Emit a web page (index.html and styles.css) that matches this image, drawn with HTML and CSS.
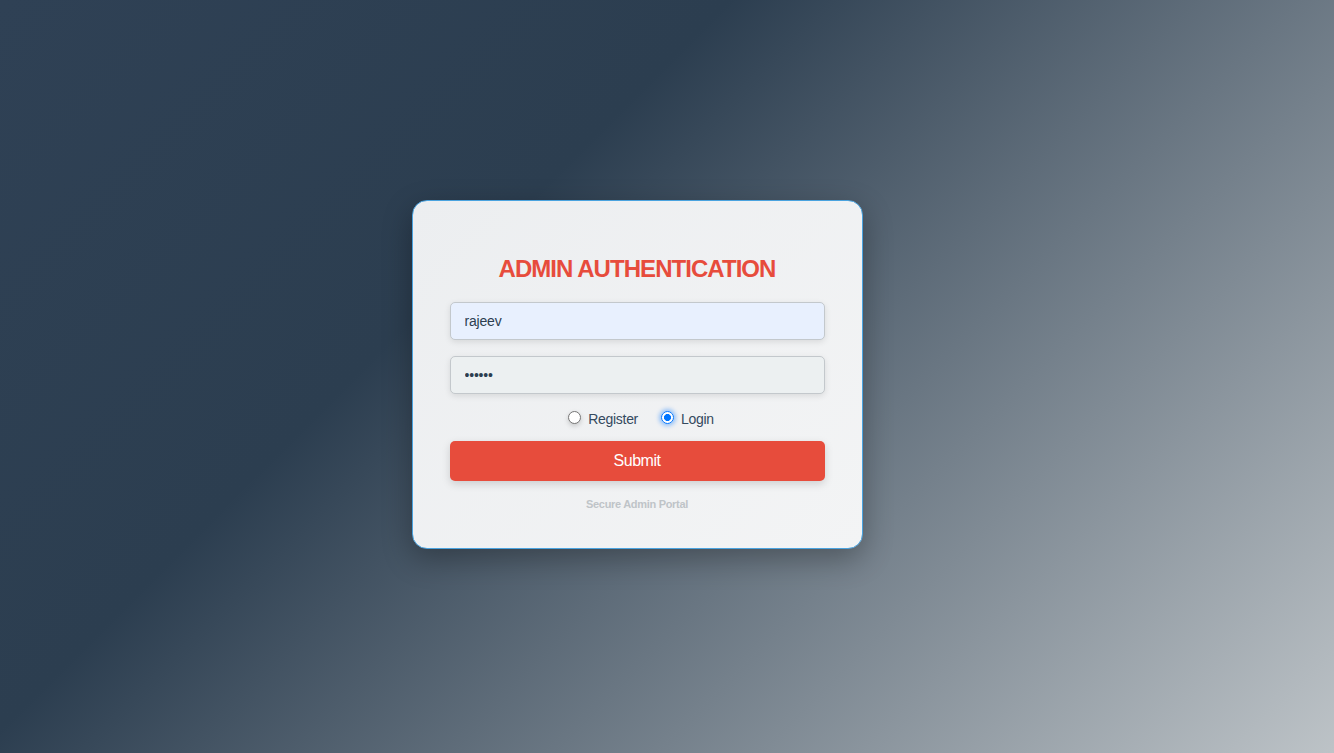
FILE: index.html
```html
<!DOCTYPE html>
<html lang="en">
<head>
<meta charset="utf-8">
<title>Admin Authentication</title>
<link rel="stylesheet" href="styles.css">
</head>
<body>
<main class="page">
  <form class="card">
    <h2 class="title">ADMIN AUTHENTICATION</h2>
    <input class="field field-autofill" type="text" value="rajeev">
    <input class="field" type="password" value="xxxxxx">
    <div class="choice">
      <label class="option"><input class="radio" type="radio" name="mode"><span>Register</span></label>
      <label class="option"><input class="radio radio-focus" type="radio" name="mode" checked><span>Login</span></label>
    </div>
    <button class="submit" type="button">Submit</button>
    <p class="footer">Secure Admin Portal</p>
  </form>
</main>
</body>
</html>
```

FILE: styles.css
```css
* { box-sizing: border-box; }

html, body {
  margin: 0;
  height: 100%;
}

body {
  background: linear-gradient(135deg, #2f4155 0%, #2c3e50 35%, #bdc3c7 100%);
  font-family: "Liberation Sans", Arial, sans-serif;
  color: #2c3e50;
}

.page {
  height: 100%;
  display: flex;
  align-items: center;
  justify-content: center;
}

.card {
  width: 451px;
  margin: 0 60px 4px 0;
  padding: 54px 37px 37px;
  display: flex;
  flex-direction: column;
  background: linear-gradient(135deg, #eceef0 0%, #f3f4f5 100%);
  border: 1px solid #4aa3df;
  border-radius: 15px;
  box-shadow: 0 10px 30px rgba(0, 0, 0, 0.3);
}

.title {
  margin: 0 0 19px;
  font-size: 24px;
  line-height: 28px;
  font-weight: 700;
  letter-spacing: -0.95px;
  text-align: center;
  color: #e74c3c;
}

.field {
  height: 38px;
  width: 100%;
  padding: 0 14px;
  border: 1px solid #c3c8cc;
  border-radius: 5px;
  background: #ecf0f1;
  box-shadow: 0 2px 6px rgba(0, 0, 0, 0.1);
  font-family: "Liberation Sans", Arial, sans-serif;
  font-size: 14px;
  letter-spacing: -0.2px;
  color: #2c3e50;
  outline: none;
}

.field + .field { margin-top: 16px; }

.field-autofill { background: #e8f0fe; }

.choice {
  margin: 15px 0 12px;
  padding-left: 8px;
  height: 20px;
  display: flex;
  justify-content: center;
  align-items: center;
  gap: 23px;
}

.option {
  display: flex;
  align-items: center;
  font-size: 14px;
  letter-spacing: -0.3px;
  color: #34495e;
}

.radio {
  appearance: none;
  -webkit-appearance: none;
  width: 13px;
  height: 13px;
  margin: 0 7px 3px 0;
  border: 1px solid #767676;
  border-radius: 50%;
  background: #ffffff;
  box-shadow: 0 2px 5px rgba(0, 0, 0, 0.18);
}

.radio:checked {
  border-color: #0075ff;
  background: radial-gradient(circle, #0075ff 0 3.2px, #ffffff 3.8px);
}

.radio-focus {
  box-shadow: 0 0 4px 2px rgba(0, 117, 255, 0.4);
}

.submit {
  height: 40px;
  width: 100%;
  border: none;
  border-radius: 5px;
  background: #e74c3c;
  color: #ffffff;
  font-family: "Liberation Sans", Arial, sans-serif;
  font-size: 16px;
  letter-spacing: -0.5px;
  box-shadow: 0 3px 8px rgba(0, 0, 0, 0.15);
  cursor: pointer;
}

.footer {
  margin: 17px 0 0;
  line-height: 13px;
  font-size: 11px;
  font-weight: 700;
  letter-spacing: -0.3px;
  text-align: center;
  color: #bfc4c8;
}
```
